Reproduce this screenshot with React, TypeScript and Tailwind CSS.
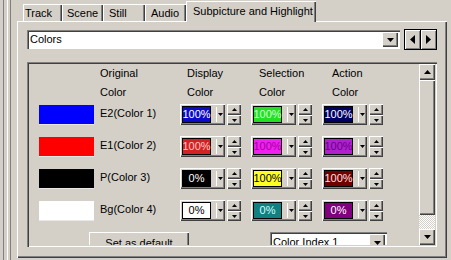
import React from 'react'

const raised = 'shadow-[inset_1px_1px_#ffffff,inset_-1px_-1px_#404040,inset_-2px_-2px_#808080]'
const sunken = 'shadow-[inset_1px_1px_#808080,inset_2px_2px_#404040,inset_-1px_-1px_#ffffff]'

type Dir = 'up' | 'down' | 'left' | 'right'

function Tri({ dir, w, h }: { dir: Dir; w: number; h: number }) {
  const pts =
    dir === 'down'
      ? `0,0 ${w},0 ${w / 2},${h}`
      : dir === 'up'
        ? `0,${h} ${w},${h} ${w / 2},0`
        : dir === 'left'
          ? `${w},0 ${w},${h} 0,${h / 2}`
          : `0,0 0,${h} ${w},${h / 2}`
  return (
    <svg width={w} height={h} viewBox={`0 0 ${w} ${h}`} className="block">
      <polygon points={pts} fill="#000" />
    </svg>
  )
}

type Cell = { bg: string; fg: string; v: string }

const rows: { swatch: string; label: string; cells: Cell[] }[] = [
  {
    swatch: 'bg-[#0000ff]',
    label: 'E2(Color 1)',
    cells: [
      { bg: 'bg-[#0c0cc8]', fg: 'text-white', v: '100%' },
      { bg: 'bg-[#22e022]', fg: 'text-[#d4ffd4]', v: '100%' },
      { bg: 'bg-[#000064]', fg: 'text-white', v: '100%' },
    ],
  },
  {
    swatch: 'bg-[#ff0000]',
    label: 'E1(Color 2)',
    cells: [
      { bg: 'bg-[#d42222]', fg: 'text-[#ffc8c8]', v: '100%' },
      { bg: 'bg-[#f020f0]', fg: 'text-[#a000a0]', v: '100%' },
      { bg: 'bg-[#b020d0]', fg: 'text-[#6a0084]', v: '100%' },
    ],
  },
  {
    swatch: 'bg-[#000000]',
    label: 'P(Color 3)',
    cells: [
      { bg: 'bg-[#000000]', fg: 'text-white', v: '0%' },
      { bg: 'bg-[#ffff22]', fg: 'text-black', v: '100%' },
      { bg: 'bg-[#700000]', fg: 'text-[#ffe0e0]', v: '100%' },
    ],
  },
  {
    swatch: 'bg-[#ffffff]',
    label: 'Bg(Color 4)',
    cells: [
      { bg: 'bg-[#ffffff]', fg: 'text-black', v: '0%' },
      { bg: 'bg-[#108080]', fg: 'text-[#d0ffff]', v: '0%' },
      { bg: 'bg-[#800080]', fg: 'text-white', v: '0%' },
    ],
  },
]

function ColorPicker({ cell }: { cell: Cell }) {
  return (
    <div className="flex w-[61px] items-center gap-[2px]">
      <div className={`flex h-[21px] w-[45px] items-center bg-[#d4d0c8] pl-[2px] ${raised}`}>
        <div className={`flex h-[17px] w-[29px] items-center justify-center border border-black ${cell.bg} ${cell.fg}`}>
          {cell.v}
        </div>
        <div className="ml-[5px] flex h-[15px] w-[7px] items-center justify-center border-l border-white">
          <Tri dir="down" w={5} h={3} />
        </div>
      </div>
      <div className="flex h-[21px] w-[14px] flex-col">
        <div className={`flex h-[11px] items-center justify-center bg-[#d4d0c8] ${raised}`}>
          <Tri dir="up" w={5} h={3} />
        </div>
        <div className={`flex h-[10px] items-center justify-center bg-[#d4d0c8] ${raised}`}>
          <Tri dir="down" w={5} h={3} />
        </div>
      </div>
    </div>
  )
}

function Tab({ label, w, pl, selected }: { label: string; w: string; pl: string; selected?: boolean }) {
  if (selected) {
    return (
      <div className={`relative z-10 -mb-px h-[21px] ${w} ${pl} bg-[#d4d0c8] pt-[4px] shadow-[inset_1px_1px_#ffffff,inset_-1px_0_#404040,inset_-2px_0_#808080]`}>
        {label}
      </div>
    )
  }
  return (
    <div className={`h-[17px] ${w} ${pl} pt-[3px] shadow-[inset_1px_1px_#ffffff,inset_-1px_0_#404040,inset_-2px_0_#808080]`}>
      {label}
    </div>
  )
}

export default function App() {
  return (
    <div className="flex h-[260px] w-[451px] overflow-hidden bg-[#d4d0c8] font-['Liberation_Sans',Arial,sans-serif] text-[11px] leading-[13px] text-black">
      {/* left frame lines */}
      <div className="flex w-[17px] shrink-0">
        <div className="w-[3px]" />
        <div className="w-px bg-[#808080]" />
        <div className="w-[3px]" />
        <div className="w-px bg-white" />
        <div className="w-[2px]" />
        <div className="w-px bg-[#808080]" />
      </div>

      <div className="flex w-[430px] flex-col">
        {/* tabs */}
        <div className="flex h-[21px] shrink-0 items-end pl-[6px]">
          <Tab label="Track" w="w-[39px]" pl="pl-[2px]" />
          <Tab label="Scene" w="w-[41px]" pl="pl-[5px]" />
          <Tab label="Still" w="w-[42px]" pl="pl-[6px]" />
          <Tab label="Audio" w="w-[41px]" pl="pl-[6px]" />
          <Tab label="Subpicture and Highlight" w="w-[130px]" pl="pl-[7px]" selected />
        </div>

        {/* panel */}
        <div className={`flex h-[237px] shrink-0 flex-col pl-[10px] pt-[8px] ${raised}`}>
          <div className="flex h-[21px] shrink-0 items-center">
            <div className={`flex h-[19px] w-[373px] items-center bg-white pl-[3px] pr-[2px] ${sunken}`}>
              <span className="flex-1">Colors</span>
              <div className={`flex h-[15px] w-[16px] items-center justify-center bg-[#d4d0c8] ${raised}`}>
                <Tri dir="down" w={7} h={4} />
              </div>
            </div>
            <div className="ml-[4px] flex h-[21px] w-[33px] border border-black bg-[#d4d0c8]">
              <div className="flex flex-1 items-center justify-center shadow-[inset_1px_1px_#ffffff,inset_-1px_-1px_#808080]">
                <Tri dir="left" w={5} h={9} />
              </div>
              <div className="flex flex-1 items-center justify-center border-l border-black shadow-[inset_1px_1px_#ffffff,inset_-1px_-1px_#808080]">
                <Tri dir="right" w={5} h={9} />
              </div>
            </div>
          </div>

          {/* scroll view */}
          <div className={`mt-[12px] flex h-[185px] w-[410px] shrink-0 p-[2px] ${sunken}`}>
            <div className="flex flex-1 flex-col overflow-hidden">
              <div className="flex h-[19px] shrink-0 items-center">
                <div className="w-[71px]" />
                <div className="w-[80px]">Original</div>
                <div className="w-[71px] pl-[7px]">Display</div>
                <div className="w-[71px] pl-[8px]">Selection</div>
                <div className="pl-[10px]">Action</div>
              </div>
              <div className="flex h-[19px] shrink-0 items-center">
                <div className="w-[71px]" />
                <div className="w-[80px]">Color</div>
                <div className="w-[71px] pl-[7px]">Color</div>
                <div className="w-[71px] pl-[8px]">Color</div>
                <div className="pl-[10px]">Color</div>
              </div>

              <div className="mt-[2px] flex shrink-0 flex-col gap-[11px]">
                {rows.map((r) => (
                  <div key={r.label} className="flex h-[21px] shrink-0 items-center">
                    <div className={`ml-[10px] h-[20px] w-[55px] border-b border-[#e8e8e8] ${r.swatch}`} />
                    <div className="ml-[6px] w-[80px] pb-[3px]">{r.label}</div>
                    <div className="flex gap-[10px]">
                      {r.cells.map((c, i) => (
                        <ColorPicker key={i} cell={c} />
                      ))}
                    </div>
                  </div>
                ))}
              </div>

              <div className="mt-[11px] flex shrink-0 items-start">
                <div className={`ml-[60px] flex h-[23px] w-[100px] shrink-0 items-center justify-center ${raised}`}>
                  Set as default
                </div>
                <div className={`ml-[81px] flex h-[21px] w-[117px] shrink-0 items-center bg-white pl-[3px] pr-[2px] ${sunken}`}>
                  <span className="flex-1">Color Index 1</span>
                  <div className={`flex h-[17px] w-[16px] items-center justify-center bg-[#d4d0c8] ${raised}`}>
                    <Tri dir="down" w={7} h={4} />
                  </div>
                </div>
              </div>
            </div>

            {/* scrollbar */}
            <div className="flex w-[16px] flex-col">
              <div className={`flex h-[16px] shrink-0 items-center justify-center bg-[#d4d0c8] ${raised}`}>
                <Tri dir="up" w={7} h={4} />
              </div>
              <div className={`h-[135px] shrink-0 bg-[#d4d0c8] ${raised}`} />
              <div className="flex-1 bg-[repeating-conic-gradient(#ffffff_0%_25%,#d4d0c8_0%_50%)] bg-[length:2px_2px]" />
              <div className={`flex h-[16px] shrink-0 items-center justify-center bg-[#d4d0c8] ${raised}`}>
                <Tri dir="down" w={7} h={4} />
              </div>
            </div>
          </div>
        </div>
      </div>
    </div>
  )
}
